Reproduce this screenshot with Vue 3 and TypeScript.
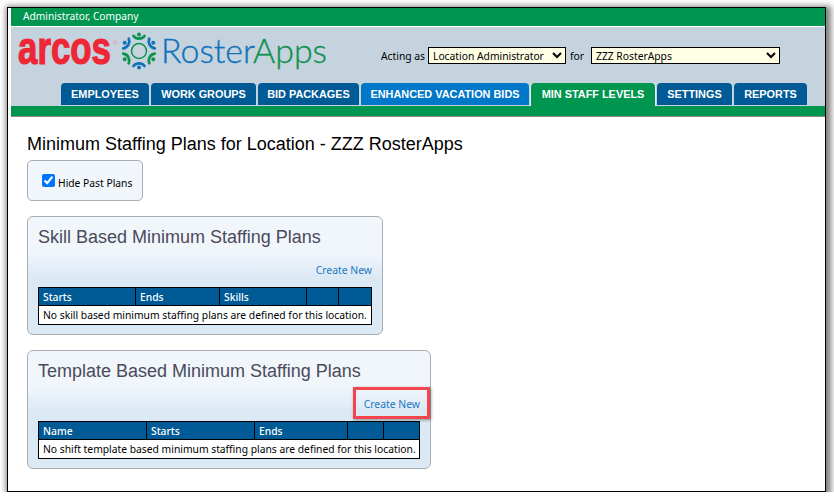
<script setup lang="ts">
const tabs = [
  { label: 'EMPLOYEES', w: 88 },
  { label: 'WORK GROUPS', w: 105 },
  { label: 'BID PACKAGES', w: 101 },
  { label: 'ENHANCED VACATION BIDS', w: 168, kind: 'light' },
  { label: 'MIN STAFF LEVELS', w: 124, kind: 'active' },
  { label: 'SETTINGS', w: 75 },
  { label: 'REPORTS', w: 73 },
]
const arcs = [0, 60, 120, 180, 240, 300]
</script>

<template>
  <div class="frame">
    <div class="topbar">Administrator, Company</div>
    <header class="banner">
      <div class="brand-row">
        <svg class="logo" width="320" height="64" viewBox="0 0 320 64">
          <text class="arcos" transform="translate(0 46.5) scale(0.758 1)">arcos</text>
          <text x="95" y="28" class="reg">®</text>
          <g transform="translate(121 34)">
            <circle r="7.5" fill="none" stroke="#0f9150" stroke-width="1.5" />
            <g v-for="(a, i) in arcs" :key="a" :transform="`rotate(${a})`">
              <path d="M-5.5 -15 A 7 7 0 0 0 5.5 -15" fill="none" :stroke="i % 2 ? '#1272b8' : '#0f9150'" stroke-width="2.8" stroke-linecap="round" />
              <circle cx="0" cy="-16.5" r="2" :fill="i % 2 ? '#1272b8' : '#0f9150'" />
            </g>
          </g>
          <text x="143" y="46" class="roster" textLength="166" lengthAdjust="spacingAndGlyphs">Roster<tspan class="apps">Apps</tspan></text>
        </svg>
        <div class="acting">
          <label>Acting as</label>
          <select class="sel sel-role"><option>Location Administrator</option></select>
          <label class="for">for</label>
          <select class="sel sel-loc"><option>ZZZ RosterApps</option></select>
        </div>
      </div>
      <nav class="tabs">
        <a v-for="t in tabs" :key="t.label" class="tab" :class="t.kind" :style="{ width: t.w + 'px' }">{{ t.label }}</a>
      </nav>
    </header>
    <div class="greenbar"></div>

    <main class="content">
      <h1>Minimum Staffing Plans for Location - ZZZ RosterApps</h1>
      <div class="filter">
        <label><input type="checkbox" checked /><span>Hide Past Plans</span></label>
      </div>

      <section class="panel skill">
        <h2>Skill Based Minimum Staffing Plans</h2>
        <div class="actions"><a class="create">Create New</a></div>
        <table>
          <colgroup><col style="width:96px" /><col style="width:84px" /><col style="width:87px" /><col style="width:32px" /><col /></colgroup>
          <thead><tr><th>Starts</th><th>Ends</th><th>Skills</th><th></th><th></th></tr></thead>
          <tbody><tr><td colspan="5">No skill based minimum staffing plans are defined for this location.</td></tr></tbody>
        </table>
      </section>

      <section class="panel template">
        <h2>Template Based Minimum Staffing Plans</h2>
        <div class="actions highlighted"><a class="create">Create New</a><span class="callout"></span></div>
        <table>
          <colgroup><col style="width:107px" /><col style="width:108px" /><col style="width:93px" /><col style="width:36px" /><col /></colgroup>
          <thead><tr><th>Name</th><th>Starts</th><th>Ends</th><th></th><th></th></tr></thead>
          <tbody><tr><td colspan="5">No shift template based minimum staffing plans are defined for this location.</td></tr></tbody>
        </table>
      </section>
    </main>
  </div>
</template>

<style>
html, body { margin: 0; background: #fff; }
</style>

<style scoped>
.frame {
  box-sizing: border-box;
  width: 819px;
  height: 485px;
  margin: 7px 0 0 7px;
  padding: 0 0 0 3px;
  border: 1px solid #000;
  background: #fff;
  box-shadow: 2px 2px 6px 3px rgba(0, 0, 0, 0.5);
  font-family: "Noto Sans", sans-serif;
  overflow: hidden;
}
.topbar {
  height: 18px;
  padding-left: 12px;
  background: #009650;
  border-bottom: 1px solid #fff;
  color: #fff;
  font-size: 10.2px;
  line-height: 17px;
}
.banner {
  height: 79px;
  background: #c5d3df;
  display: flex;
  flex-direction: column;
  justify-content: space-between;
}
.brand-row {
  display: flex;
  align-items: flex-start;
  height: 33px;
  padding: 6px 0 0 7px;
}
.logo { display: block; margin-top: -16px; }
.arcos {
  font-family: "Liberation Sans", sans-serif;
  font-weight: 700;
  font-size: 46px;
  fill: #ee2737;
  stroke: #ee2737;
  stroke-width: 1.2px;
}
.reg {
  font-family: "Liberation Sans", sans-serif;
  font-size: 6px;
  fill: #e8909a;
}
.roster {
  font-family: Lato, sans-serif;
  font-weight: 300;
  font-size: 34px;
  fill: #1272b8;
  stroke: #1272b8;
  stroke-width: 0.35px;
}
.apps { fill: #0f9150; stroke: #0f9150; }
.acting {
  display: flex;
  align-items: center;
  margin: 14px 0 0 43px;
  font-size: 10.3px;
  color: #000;
}
.sel {
  box-sizing: border-box;
  height: 17px;
  padding: 0;
  border: 1px solid #000;
  border-radius: 0;
  background-color: #ffffe6;
  font-family: "Noto Sans", sans-serif;
  font-size: 10.3px;
  color: #000;
}
.sel-role { width: 138px; margin-left: 3px; }
.sel-loc { width: 189px; }
.for { margin: 0 7px 0 4px; }
.tabs {
  display: flex;
  gap: 2px;
  padding-left: 50px;
  height: 22px;
  margin-bottom: 1px;
}
.tab {
  box-sizing: border-box;
  flex: none;
  height: 22px;
  background: #005a96;
  border-radius: 4px 4px 0 0;
  color: #fff;
  font-family: "Liberation Sans", sans-serif;
  font-size: 10.9px;
  font-weight: 700;
  line-height: 23px;
  text-align: center;
  white-space: nowrap;
}
.tab.light { background: #0077c8; }
.tab.active {
  background: #009650;
  height: 23px;
  position: relative;
  z-index: 1;
  box-shadow: 1px 0 0 #e6eef4, -1px 0 0 #e6eef4;
}
.greenbar {
  height: 10px;
  background: #009650;
  border-bottom: 1px solid #8a8a8a;
}
.content { padding: 17px 0 0 16px; }
h1 {
  margin: 0;
  font-family: "Liberation Sans", sans-serif;
  font-size: 18px;
  font-weight: 400;
  line-height: 21px;
  color: #000;
}
.filter {
  box-sizing: border-box;
  width: 116px;
  height: 41px;
  margin-top: 5px;
  padding: 13px 0 0 14px;
  background: #f1f6fb;
  border: 1px solid #a8adb4;
  border-radius: 5px;
}
.filter label { display: flex; align-items: flex-start; font-size: 10.3px; line-height: 14px; color: #000; }
.filter input { width: 13px; height: 13px; margin: 0 3px 0 0; accent-color: #0075ff; }
.filter span { padding-top: 2px; }
.panel {
  box-sizing: border-box;
  margin-top: 15px;
  padding: 0 10px;
  background: linear-gradient(#f1f6fb 0, #f1f6fb 30%, #dbe9f5 52%, #dbe9f5 100%);
  border: 1px solid #a8adb4;
  border-radius: 6px;
}
.skill { width: 356px; height: 119px; }
.template { width: 404px; height: 119px; }
h2 {
  margin: 0;
  padding-top: 9px;
  font-family: "Liberation Sans", sans-serif;
  font-size: 18px;
  font-weight: 400;
  line-height: 22px;
  color: #4a4a5c;
}
.actions {
  position: relative;
  height: 17px;
  margin-top: 14px;
  text-align: right;
  font-size: 10.4px;
  line-height: 17px;
}
.create { color: #1a78c2; }
.callout {
  position: absolute;
  right: -10px;
  top: -9px;
  width: 77px;
  height: 32px;
  box-sizing: border-box;
  border: 3px solid #f4444c;
  box-shadow: 1px 1px 3px rgba(0, 0, 0, 0.4);
}
table {
  box-sizing: border-box;
  width: 100%;
  margin-top: 8px;
  table-layout: fixed;
  border-collapse: separate;
  border-spacing: 0;
  border: 1px solid #000;
  background: #fff;
  font-size: 10.3px;
}
th {
  height: 17px;
  padding: 1px 4px 0;
  box-sizing: border-box;
  background: #005a96;
  border-left: 1px solid #000;
  border-bottom: 1px solid #000;
  color: #fff;
  font-weight: 500;
  text-align: left;
  line-height: 16px;
}
th:first-child { border-left: 0; }
td {
  height: 18px;
  padding: 0 4px;
  box-sizing: border-box;
  color: #000;
  line-height: 17px;
  white-space: nowrap;
}
</style>
